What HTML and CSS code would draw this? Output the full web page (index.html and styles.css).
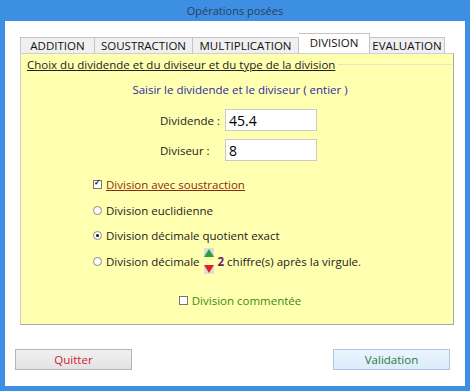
FILE: index.html
```html
<!DOCTYPE html>
<html lang="fr">
<head>
	<meta charset="UTF-8">
	<title>Opérations posées</title>
	<link rel="stylesheet" href="styles.css">
</head>
<body>
	<div class="window">
		<div class="title">Opérations posées</div>
		<div class="client">
			<ul class="tabs">
				<li class="t1">ADDITION</li>
				<li class="t2">SOUSTRACTION</li>
				<li class="t3">MULTIPLICATION</li>
				<li class="t4 active">DIVISION</li>
				<li class="t5">EVALUATION</li>
			</ul>
			<div class="panel">
				<div class="legend"><span>Choix du dividende et du diviseur et du type de la division</span></div>
				<div class="hint">Saisir le dividende et le diviseur ( entier )</div>
				<div class="fields">
					<label>Dividende :</label><div class="input">45.4</div>
					<label>Diviseur :</label><div class="input">8</div>
				</div>
				<div class="options">
					<div class="opt check"><span class="box on"></span><u>Division avec soustraction</u></div>
					<div class="opt"><span class="radio"></span>Division euclidienne</div>
					<div class="opt"><span class="radio on"></span>Division décimale quotient exact</div>
					<div class="opt"><span class="radio"></span>Division décimale
						<span class="spin"><i class="up"></i><i class="down"></i></span>
						<b>2</b>&nbsp;chiffre(s) après la virgule.</div>
				</div>
				<div class="comment"><span class="box"></span>Division commentée</div>
			</div>
			<div class="buttons">
				<div class="btn quit">Quitter</div>
				<div class="btn ok">Validation</div>
			</div>
		</div>
	</div>
</body>
</html>
```
FILE: styles.css
```css
body,ul{ margin: 0; padding: 0; }
li{ list-style: none; }
body{ font-family: "Open Sans", "Noto Sans", sans-serif; font-size: 11.5px; color: #1a1a1a; }

.window{ width: 460px; height: 386px; background: #3d8fe4; padding: 0 5px 5px; }
.title{ height: 21px; line-height: 21px; text-align: center; color: #2c3e55; font-size: 11px; }
.client{ background: #fff; height: 365px; padding: 13px 0 0; box-sizing: border-box; }

.tabs{ display: flex; align-items: flex-end; height: 19px; margin-left: 15px; }
.tabs li{ height: 16px; line-height: 16px; background: #f0f0f0; border: 1px solid #c4c4c4; border-bottom: none; text-align: center; color: #111; box-sizing: border-box; }
.tabs .t1{ width: 75px; }
.tabs .t2{ width: 98px; border-left: none; }
.tabs .t3{ width: 106px; border-left: none; }
.tabs .t4{ width: 71px; height: 20px; line-height: 18px; background: #fff; border-left: none; }
.tabs .t5{ width: 75px; border-left: none; }

.panel{ margin-left: 15px; width: 434px; height: 272px; background: #ffffb0; border: 1px solid #cfcfcf; border-right-color: #a8a8a8; border-bottom-color: #a8a8a8; box-sizing: border-box; padding: 3px 0 0 6px; }
.legend{ display: flex; align-items: center; }
.legend span{ text-decoration: underline; color: #222; }
.legend:after{ content: ""; flex: 1; height: 1px; background: #e6e6c0; margin: 0 1px 0 3px; }

.hint{ text-align: center; color: #2b2ba8; margin: 10px 0 0; }

.fields{ display: grid; grid-template-columns: 65px 92px; gap: 8px 0; align-items: center; margin: 12px 0 0 133px; }
.fields label{ color: #222; }
.input{ height: 22px; line-height: 21px; background: #fff; border: 1px solid #c9c9c9; box-sizing: border-box; padding-left: 3px; font-size: 14px; color: #000; }

.options{ margin: 11px 0 0 66px; }
.opt{ display: flex; align-items: center; height: 25.5px; color: #222; }
.opt.check{ color: #8a2a14; }
.opt b{ color: #6a1a6a; margin-left: 4px; }
.box{ width: 7px; height: 7px; border: 1px solid #777; background: #fff; margin-right: 4px; position: relative; }
.box.on:after{ content: "✓"; position: absolute; left: 0; top: -5px; font-size: 8px; font-weight: bold; color: #111; }
.radio{ width: 7px; height: 7px; border: 1px solid #888; border-radius: 50%; background: #fff; margin-right: 4px; position: relative; }
.radio.on:after{ content: ""; position: absolute; left: 2px; top: 2px; width: 3px; height: 3px; border-radius: 50%; background: #111; }

.spin{ display: flex; flex-direction: column; gap: 8px; margin-left: 4px; }
.spin i{ width: 10px; height: 9px; background: #ddd; display: block; position: relative; }
.spin .up:after{ content: ""; position: absolute; left: 0; top: 1px; border-left: 5px solid transparent; border-right: 5px solid transparent; border-bottom: 8px solid #2ca040; }
.spin .down:after{ content: ""; position: absolute; left: 0; top: 0; border-left: 5px solid transparent; border-right: 5px solid transparent; border-top: 8px solid #e0202a; }

.comment{ display: flex; align-items: center; justify-content: center; color: #3c8a1a; margin: 19px 0 0; }

.buttons{ display: flex; justify-content: space-between; padding: 24px 15px 0 10px; }
.btn{ width: 117px; height: 21px; line-height: 19px; text-align: center; box-sizing: border-box; }
.quit{ background: linear-gradient(#f0f0f0, #e3e3e3); border: 1px solid #b5b5b5; color: #cc2233; }
.ok{ background: linear-gradient(#eaf4fd, #dcecfc); border: 1px solid #a9c8e8; color: #2a7a3a; }
```
